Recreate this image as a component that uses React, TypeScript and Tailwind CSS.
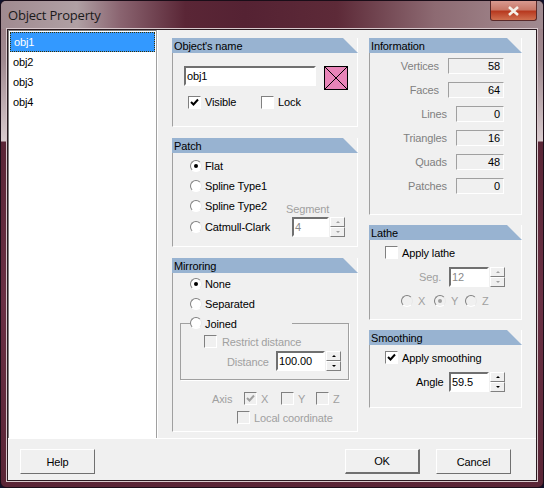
import type { ReactNode } from 'react'

const FONT = "font-['Liberation_Sans',Arial,sans-serif] text-[11px] leading-[16px] tracking-[-0.12px]"

function Panel({ title, className, children }: { title: string; className: string; children: ReactNode }) {
  return (
    <div className={`flex flex-col border-l border-b border-r border-l-[#a0a0a0] border-b-white border-r-white ${className}`}>
      <div className="-ml-px -mr-px h-[15px] shrink-0 overflow-hidden bg-[#98b3d1] pl-[2px] text-black [clip-path:polygon(0_0,calc(100%-15px)_0,100%_100%,0_100%)]">
        {title}
      </div>
      {children}
    </div>
  )
}

function Check({ checked, disabled, className = '' }: { checked?: boolean; disabled?: boolean; className?: string }) {
  return (
    <span
      className={`flex h-[13px] w-[13px] shrink-0 items-center justify-center border border-t-[#808080] border-l-[#808080] border-r-white border-b-white ${
        disabled ? 'bg-[#f0f0f0]' : 'bg-white'
      } ${className}`}
    >
      {checked && (
        <svg width="9" height="9" viewBox="0 0 9 9">
          <path d="M1 4 L3.5 6.5 L8 1.5" fill="none" stroke={disabled ? '#a0a0a0' : '#000'} strokeWidth="2" />
        </svg>
      )}
    </span>
  )
}

function Radio({ checked, disabled, className = '' }: { checked?: boolean; disabled?: boolean; className?: string }) {
  return (
    <span
      className={`flex h-[12px] w-[12px] shrink-0 items-center justify-center rounded-full border border-t-[#808080] border-l-[#808080] border-r-[#e8e8e8] border-b-white ${
        disabled ? 'bg-[#f0f0f0]' : 'bg-white'
      } ${className}`}
    >
      {checked && <span className={`h-[4px] w-[4px] rounded-full ${disabled ? 'bg-[#a0a0a0]' : 'bg-black'}`} />}
    </span>
  )
}

function RadioRow({ label, checked, className = '' }: { label: string; checked?: boolean; className?: string }) {
  return (
    <div className={`flex h-[20px] items-center ${className}`}>
      <Radio checked={checked} />
      <span className="ml-[3px] w-[81px]">{label}</span>
    </div>
  )
}

function Spin({ value, width, disabled }: { value: string; width: string; disabled?: boolean }) {
  const arrow = disabled ? 'border-x-transparent border-[#a0a0a0]' : 'border-x-transparent border-black'
  const btn =
    'flex h-[10px] w-[15px] items-center justify-center border border-t-white border-l-white border-r-[#808080] border-b-[#808080] bg-[#f0f0f0]'
  return (
    <div className="flex h-[20px] items-stretch">
      <div
        className={`${width} border-2 border-t-[#707070] border-l-[#707070] border-r-white border-b-white bg-white pl-px leading-[16px] ${
          disabled ? 'text-[#8a8a8a]' : 'text-black'
        }`}
      >
        {value}
      </div>
      <div className="ml-px flex flex-col">
        <div className={btn}>
          <span className={`h-0 w-0 border-x-[2px] border-b-[2px] ${arrow}`} />
        </div>
        <div className={btn}>
          <span className={`h-0 w-0 border-x-[2px] border-t-[2px] ${arrow}`} />
        </div>
      </div>
    </div>
  )
}

function Stat({ label, value, wide }: { label: string; value: string; wide?: boolean }) {
  return (
    <div className="flex h-[16px] items-center justify-end">
      <span className="text-[#808080]">{label}</span>
      <div
        className={`ml-[9px] h-[16px] ${wide ? 'w-[56px]' : 'w-[48px]'} border border-t-[#a0a0a0] border-l-[#a0a0a0] border-r-white border-b-white pr-[3px] text-right leading-[14px] text-black`}
      >
        {value}
      </div>
    </div>
  )
}

function Btn({ label, primary }: { label: string; primary?: boolean }) {
  return (
    <button
      className={`flex h-[25px] w-[75px] items-center justify-center border border-t-white border-l-white bg-[#f0f0f0] text-black ${
        primary
          ? 'border-r-2 border-b-2 border-t-[#707070] border-l-[#707070] border-r-[#707070] border-b-[#707070]'
          : 'border-r-[#707070] border-b-[#707070]'
      }`}
    >
      {label}
    </button>
  )
}

export default function App() {
  return (
    <div className="h-[488px] w-[544px] bg-[#10102a]">
      <div
        className={`${FONT} flex h-[488px] w-[544px] flex-col overflow-hidden rounded-[6px] border border-[#1a0d18] bg-[linear-gradient(180deg,#9a7c84_0px,#a08a90_60px,#d8cacd_140px,#5a2536_141px,#6a3044_300px,#5a2536_100%)]`}
      >
        {/* title bar */}
        <div className="flex h-[28px] shrink-0 items-start bg-[linear-gradient(90deg,#a08a90_0%,#b0a0a4_14%,#8a6470_22%,#5a2636_34%,#552233_45%,#5d2a38_62%,#8d6a72_80%,#9c8086_92%,#a08a90_100%)]">
          <span className="ml-[7px] mt-[5px] font-['Open_Sans','Noto_Sans',sans-serif] text-[13px] leading-[18px] tracking-[-0.2px] text-[#1a1a1a]">
            Object Property
          </span>
          <button className="ml-auto mr-[6px] flex h-[20px] w-[47px] items-center justify-center rounded-b-[3px] border border-t-0 border-[#5a2a2a] bg-[linear-gradient(180deg,#d89a90_0%,#c87868_45%,#b83a20_55%,#d07050_100%)]">
            <svg width="13" height="10" viewBox="0 0 13 10">
              <path d="M2 1 L11 9 M11 1 L2 9" stroke="#f4f0e8" strokeWidth="2.6" />
            </svg>
          </button>
        </div>

        {/* client */}
        <div className="mx-[6px] flex h-[452px] flex-col border border-[#2a1a20] bg-[#f0f0f0] shadow-[0_0_0_1px_#d8c8cc]">
          <div className="flex h-[409px] shrink-0 border-b border-b-white">
            {/* object list */}
            <div className="w-[148px] shrink-0 border-t border-l border-t-[#808080] border-l-[#808080] bg-white pl-px pt-px">
              <div className="flex h-[20px] w-[145px] items-center border border-dotted border-[#3a3000] bg-[#3399ff] pl-[3px] text-white">
                obj1
              </div>
              {['obj2', 'obj3', 'obj4'].map((name) => (
                <div key={name} className="flex h-[20px] items-center pl-[3px] text-black">
                  {name}
                </div>
              ))}
            </div>
            <div className="w-[2px] shrink-0 border-l border-r border-l-[#a0a0a0] border-r-white" />

            {/* left column */}
            <div className="ml-[14px] flex w-[186px] shrink-0 flex-col gap-[11px] pt-[8px]">
              <Panel title="Object's name" className="h-[89px]">
                <div className="ml-[11px] mt-[13px] flex items-start">
                  <div className="h-[20px] w-[132px] border-2 border-t-[#707070] border-l-[#707070] border-r-white border-b-white bg-white pl-px leading-[16px] text-black">
                    obj1
                  </div>
                  <svg className="ml-[8px]" width="24" height="24" viewBox="0 0 24 24">
                    <rect x="0.5" y="0.5" width="23" height="23" fill="#e884b8" stroke="#000" />
                    <path d="M0 0 L24 24 M24 0 L0 24" stroke="#000" />
                  </svg>
                </div>
                <div className="ml-[15px] mt-[4px] flex h-[16px] items-center text-black">
                  <Check checked />
                  <span className="ml-[4px] w-[56px]">Visible</span>
                  <Check />
                  <span className="ml-[4px]">Lock</span>
                </div>
              </Panel>

              <Panel title="Patch" className="h-[109px]">
                <div className="ml-[17px] mt-[3px] flex flex-col text-black">
                  <RadioRow label="Flat" checked />
                  <RadioRow label="Spline Type1" />
                  <div className="flex items-start">
                    <RadioRow label="Spline Type2" />
                    <span className="mt-[5px] text-[#a0a0a0]">Segment</span>
                  </div>
                  <div className="flex items-start">
                    <RadioRow label="Catmull-Clark" />
                    <div className="ml-[6px]">
                      <Spin value="4" width="w-[37px]" disabled />
                    </div>
                  </div>
                </div>
              </Panel>

              <Panel title="Mirroring" className="h-[174px]">
                <div className="ml-[17px] mt-[1px] flex flex-col text-black">
                  <RadioRow label="None" checked />
                  <RadioRow label="Separated" />
                </div>
                <fieldset className="ml-[7px] mt-[-1px] h-[67px] w-[169px] border border-[#a0a0a0] shadow-[1px_1px_0_#fff]">
                  <legend className="ml-[9px] flex h-[20px] items-center text-black">
                    <Radio />
                    <span className="ml-[3px] mr-[3px] w-[84px] pt-px">Joined</span>
                  </legend>
                  <div className="ml-[23px] mt-[2px] flex h-[13px] items-center text-[#a0a0a0]">
                    <Check disabled />
                    <span className="ml-[5px]">Restrict distance</span>
                  </div>
                  <div className="ml-[46px] mt-[3px] flex items-center text-[#a0a0a0]">
                    <span className="w-[49px] pt-px">Distance</span>
                    <Spin value="100.00" width="w-[49px]" />
                  </div>
                </fieldset>
                <div className="ml-[39px] mt-[12px] flex h-[13px] items-center text-[#a0a0a0]">
                  <span className="w-[32px]">Axis</span>
                  <Check checked disabled />
                  <span className="ml-[4px] w-[20px]">X</span>
                  <Check disabled />
                  <span className="ml-[4px] w-[18px]">Y</span>
                  <Check disabled />
                  <span className="ml-[4px]">Z</span>
                </div>
                <div className="ml-[64px] mt-[6px] flex h-[13px] items-center text-[#a0a0a0]">
                  <Check disabled />
                  <span className="ml-[4px]">Local coordinate</span>
                </div>
              </Panel>
            </div>

            {/* right column */}
            <div className="ml-[11px] flex w-[153px] shrink-0 flex-col gap-[10px] pt-[8px]">
              <Panel title="Information" className="h-[177px]">
                <div className="mr-[17px] mt-[5px] flex flex-col gap-[8px]">
                  <Stat label="Vertices" value="58" wide />
                  <Stat label="Faces" value="64" wide />
                  <Stat label="Lines" value="0" />
                  <Stat label="Triangles" value="16" />
                  <Stat label="Quads" value="48" />
                  <Stat label="Patches" value="0" />
                </div>
              </Panel>

              <Panel title="Lathe" className="h-[95px]">
                <div className="ml-[15px] mt-[6px] flex h-[13px] items-center text-black">
                  <Check />
                  <span className="ml-[4px]">Apply lathe</span>
                </div>
                <div className="ml-[49px] mt-[8px] flex items-center text-[#a0a0a0]">
                  <span className="w-[30px]">Seg.</span>
                  <Spin value="12" width="w-[40px]" disabled />
                </div>
                <div className="ml-[31px] mt-[8px] flex h-[12px] items-center text-[#a0a0a0]">
                  <Radio disabled />
                  <span className="ml-[5px] w-[16px]">X</span>
                  <Radio checked disabled />
                  <span className="ml-[5px] w-[14px]">Y</span>
                  <Radio disabled />
                  <span className="ml-[5px]">Z</span>
                </div>
              </Panel>

              <Panel title="Smoothing" className="h-[78px]">
                <div className="ml-[15px] mt-[6px] flex h-[13px] items-center text-black">
                  <Check checked />
                  <span className="ml-[4px]">Apply smoothing</span>
                </div>
                <div className="ml-[46px] mt-[8px] flex items-center text-black">
                  <span className="w-[33px]">Angle</span>
                  <Spin value="59.5" width="w-[40px]" />
                </div>
              </Panel>
            </div>
          </div>

          {/* footer buttons */}
          <div className="flex items-start pl-[12px] pt-[10px]">
            <Btn label="Help" />
            <div className="ml-[250px]">
              <Btn label="OK" primary />
            </div>
            <div className="ml-[16px]">
              <Btn label="Cancel" />
            </div>
          </div>
        </div>
      </div>
    </div>
  )
}
